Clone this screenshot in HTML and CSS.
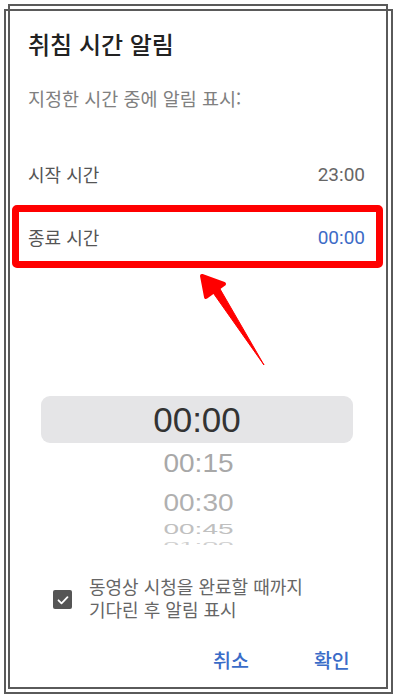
FILE: index.html
```html
<!DOCTYPE html>
<html lang="ko">
<head>
<meta charset="utf-8">
<link rel="stylesheet" href="styles.css">
</head>
<body>
<div class="frame">
  <div class="title">취침 시간 알림</div>
  <div class="subtitle">지정한 시간 중에 알림 표시:</div>
  <div class="row row-start"><span class="label">시작 시간</span><span class="value">23:00</span></div>
  <div class="row row-end"><span class="label">종료 시간</span><span class="value active">00:00</span></div>
  <div class="picker">
    <div class="pick selected">00:00</div>
    <div class="pick p1">00:15</div>
    <div class="pick p2">00:30</div>
    <div class="pick p3">00:45</div>
    <div class="pick-clip"><div class="pick p4">01:00</div></div>
  </div>
  <div class="check">
    <span class="box"><svg viewBox="0 0 18 18" width="18" height="18"><path d="M4.5 9.3l3 3 6-6.2" fill="none" stroke="#fff" stroke-width="1.8" stroke-linecap="round" stroke-linejoin="round"/></svg></span>
    <span class="check-text"><span class="line">동영상 시청을 완료할 때까지</span><span class="line">기다린 후 알림 표시</span></span>
  </div>
  <div class="actions">
    <span class="btn">취소</span>
    <span class="btn">확인</span>
  </div>
  <div class="highlight"></div>
</div>
<svg class="arrow" width="398" height="700" viewBox="0 0 398 700">
  <path d="M264 365 L209 287 L216 282 Z" fill="#ff0000" stroke="#ff0000" stroke-width="1" stroke-linejoin="round"/>
  <path d="M202 276 L224 284 L206 297 Z" fill="#ff0000" stroke="#ff0000" stroke-width="4" stroke-linejoin="round"/>
</svg>
</body>
</html>
```
FILE: styles.css
```css
* { box-sizing: border-box; }
html, body { margin: 0; padding: 0; background: #fff; }
body {
  width: 398px;
  height: 700px;
  position: relative;
  overflow: hidden;
  font-family: "Noto Sans CJK KR", "Noto Sans", sans-serif;
}
.frame {
  position: relative;
  margin: 9px 5px 0 4px;
  height: 685px;
  border: 2px solid #5a5a5a;
  display: flex;
  flex-direction: column;
}
.frame::after {
  content: "";
  position: absolute;
  left: 2px;
  top: -7px;
  right: 3px;
  bottom: 3px;
  border: 2px solid #5a5a5a;
  pointer-events: none;
}
.title {
  margin: 17px 0 0 22px;
  font-size: 24px;
  line-height: 32px;
  font-weight: 500;
  color: #222;
}
.subtitle {
  margin: 26px 0 0 22px;
  font-size: 18.5px;
  line-height: 24px;
  color: #808080;
}
.row {
  display: flex;
  justify-content: space-between;
  align-items: center;
  padding: 0 26px 0 22px;
  height: 24px;
  font-size: 18px;
}
.row-start { margin-top: 52px; }
.row-end { margin-top: 39px; }
.label { color: #555; }
.value { color: #666; font-family: Roboto, "Noto Sans", sans-serif; font-size: 19px; }
.value.active { color: #3d6bc6; }
.picker {
  margin-top: 147px;
  display: flex;
  flex-direction: column;
  align-items: center;
  font-family: "Liberation Sans", Arial, sans-serif;
}
.pick { text-align: center; }
.selected {
  align-self: flex-start;
  margin-left: 35px;
  width: 312px;
  height: 47px;
  line-height: 47px;
  border-radius: 9px;
  background: #e5e5e7;
  font-size: 35px;
  color: #333;
}
.p1 {
  margin-top: 6px;
  font-size: 28px;
  line-height: 30px;
  color: #a8a8a8;
  transform: scaleY(0.9);
}
.p2 {
  margin-top: 10px;
  font-size: 28px;
  line-height: 28px;
  color: #b0b0b0;
  transform: scaleY(0.84);
}
.p3 {
  margin-top: 4px;
  font-size: 28px;
  line-height: 16px;
  color: #c0c0c0;
  transform: scaleY(0.55);
}
.pick-clip {
  height: 5px;
  overflow: hidden;
  margin-top: 3px;
}
.p4 {
  font-size: 28px;
  line-height: 10px;
  color: #d0d0d0;
  transform: scaleY(0.3);
}
.check {
  margin: 30px 0 0 47px;
  display: flex;
  align-items: center;
  gap: 17px;
}
.box {
  width: 19px;
  height: 19px;
  border-radius: 2px;
  background: #555;
  display: flex;
  align-items: center;
  justify-content: center;
  margin-top: 3px;
}
.box svg { display: block; }
.check-text {
  display: flex;
  flex-direction: column;
  font-size: 18px;
  line-height: 23px;
  color: #666;
}
.line { display: block; height: 23px; }
.actions {
  margin: 27px 0 0 207px;
  display: flex;
  gap: 65px;
}
.btn {
  font-size: 19.5px;
  line-height: 24px;
  font-weight: 500;
  color: #3a6cc8;
}
.highlight {
  position: absolute;
  left: 6px;
  top: 194px;
  width: 371px;
  height: 63px;
  border: 7px solid #ff0000;
  border-radius: 5px;
}
.arrow {
  position: absolute;
  left: 0;
  top: 0;
  pointer-events: none;
}
```
